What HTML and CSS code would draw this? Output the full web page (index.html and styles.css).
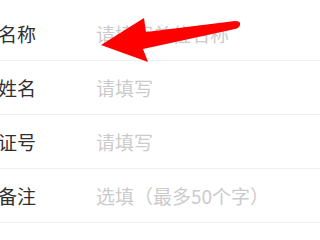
FILE: index.html
```html
<!DOCTYPE html>
<html lang="zh">
<head>
<meta charset="utf-8">
<link rel="stylesheet" href="styles.css">
</head>
<body>
<div class="form">
  <div class="row"><span class="label">名称</span><span class="ph">请填写单位名称</span></div>
  <div class="row"><span class="label">姓名</span><span class="ph">请填写</span></div>
  <div class="row"><span class="label">证号</span><span class="ph">请填写</span></div>
  <div class="row"><span class="label">备注</span><span class="ph">选填（最多50个字）</span></div>
</div>
<svg class="arrow" width="320" height="240" viewBox="0 0 320 240">
  <path d="M101 45 L144 18 L146 32 L235 21 Q241 21 240 25 Q239 28 235 29 L143 49 L148 62 Z" fill="#ff0000"/>
</svg>
</body>
</html>
```
FILE: styles.css
```css
html, body {
  margin: 0;
  padding: 0;
  background: #ffffff;
}
body {
  width: 320px;
  height: 240px;
  overflow: hidden;
  position: relative;
  font-family: "Noto Sans CJK SC", "Noto Sans", sans-serif;
}
.form {
  padding-top: 7px;
  display: flex;
  flex-direction: column;
}
.row {
  height: 53px;
  border-bottom: 1px solid #f0f0f0;
  display: flex;
  align-items: center;
  font-size: 19px;
  overflow: hidden;
}
.label {
  margin-left: -2px;
  width: 98px;
  flex: none;
  color: #303030;
}
.ph {
  color: #cbcbcb;
  white-space: nowrap;
}
.arrow {
  position: absolute;
  left: 0;
  top: 0;
}
```
